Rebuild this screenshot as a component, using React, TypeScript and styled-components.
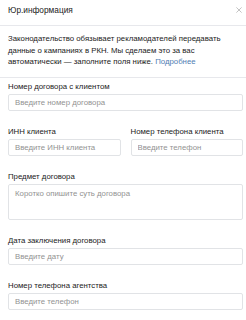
import * as React from "react";
import styled, { createGlobalStyle } from "styled-components";

const GlobalStyle = createGlobalStyle`
  html, body {
    margin: 0;
    padding: 0;
    background: #ffffff;
  }
  body {
    font-family: "Liberation Sans", Arial, sans-serif;
    color: #222222;
  }
  * {
    box-sizing: border-box;
  }
`;

const Panel = styled.div`
  width: 246px;
  height: 320px;
  background: #ffffff;
  overflow: hidden;
`;

const Header = styled.div`
  display: flex;
  align-items: center;
  justify-content: space-between;
  height: 26px;
  padding: 4px 4px 10px 8px;
  border-bottom: 1px solid #e7e8ec;
`;

const Title = styled.div`
  font-size: 8.3px;
  line-height: 12px;
  color: #222;
`;

const CloseButton = styled.button`
  appearance: none;
  border: none;
  background: none;
  padding: 0;
  width: 7px;
  height: 7px;
  display: flex;
  align-items: center;
  justify-content: center;
  cursor: pointer;
`;

const Notice = styled.p`
  margin: 0;
  padding: 7px 8px 9px;
  font-size: 7.8px;
  line-height: 11.5px;
  color: #222;
  border-bottom: 1px solid #e7e8ec;
`;

const Link = styled.a`
  color: #4f7db3;
  text-decoration: none;
`;

const Form = styled.div`
  padding: 3.5px 3px 0 8px;
`;

const Row = styled.div`
  display: grid;
  grid-template-columns: 1fr 1fr;
  column-gap: 10px;
`;

const Field = styled.div`
  margin-bottom: 15px;
  min-width: 0;
`;

const Label = styled.label`
  display: block;
  font-size: 7.8px;
  line-height: 11px;
  color: #222;
  margin-bottom: 2px;
  white-space: nowrap;
`;

const Input = styled.input`
  display: block;
  width: 100%;
  height: 17px;
  padding: 0 6px;
  border: 1px solid #e1e3e6;
  border-radius: 2px;
  font-family: inherit;
  font-size: 7.8px;
  color: #222;
  outline: none;
  &::placeholder {
    color: #929292;
  }
`;

const TextArea = styled.textarea<{ $height: number }>`
  display: block;
  width: 100%;
  height: ${(p) => p.$height}px;
  padding: 2.5px 6px;
  border: 1px solid #e1e3e6;
  border-radius: 2px;
  font-family: inherit;
  font-size: 7.8px;
  line-height: 11px;
  resize: none;
  outline: none;
  &::placeholder {
    color: #929292;
  }
`;

function CloseIcon() {
  return (
    <svg width="6" height="6" viewBox="0 0 6 6">
      <path d="M0.4 0.4 L5.6 5.6 M5.6 0.4 L0.4 5.6" stroke="#bcbcbc" strokeWidth="0.9" />
    </svg>
  );
}

export default function App() {
  return (
    <Panel>
      <GlobalStyle />
      <Header>
        <Title>Юр.информация</Title>
        <CloseButton aria-label="Закрыть">
          <CloseIcon />
        </CloseButton>
      </Header>
      <Notice>
        Законодательство обязывает рекламодателей передавать данные о кампаниях в
        РКН. Мы сделаем это за вас автоматически — заполните поля ниже.{" "}
        <Link href="#">Подробнее</Link>
      </Notice>
      <Form>
        <Field>
          <Label>Номер договора с клиентом</Label>
          <Input placeholder="Введите номер договора" />
        </Field>
        <Row>
          <Field>
            <Label>ИНН клиента</Label>
            <Input placeholder="Введите ИНН клиента" />
          </Field>
          <Field>
            <Label>Номер телефона клиента</Label>
            <Input placeholder="Введите телефон" />
          </Field>
        </Row>
        <Field>
          <Label>Предмет договора</Label>
          <TextArea $height={36} placeholder="Коротко опишите суть договора" />
        </Field>
        <Field>
          <Label>Дата заключения договора</Label>
          <Input placeholder="Введите дату" />
        </Field>
        <Field>
          <Label>Номер телефона агентства</Label>
          <Input placeholder="Введите телефон" />
        </Field>
      </Form>
    </Panel>
  );
}
